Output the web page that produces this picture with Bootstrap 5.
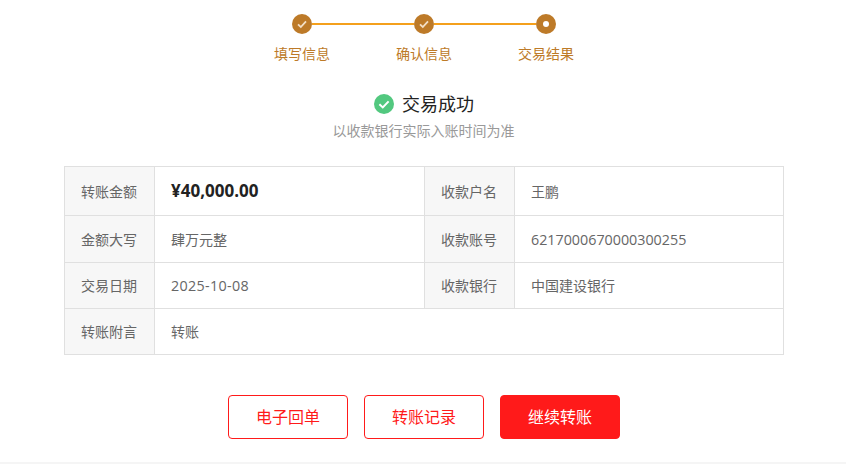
<!DOCTYPE html>
<html lang="zh-CN">
<head>
<meta charset="utf-8">
<title>交易结果</title>
<link rel="stylesheet" href="https://cdn.jsdelivr.net/npm/bootstrap@5.3.0/dist/css/bootstrap.min.css">
<style>
html,body{height:464px;overflow:hidden;background:#fff}
body{font-family:"Open Sans","Noto Sans CJK SC",sans-serif;font-size:14px;color:#666}
.page-wrap{height:462px;padding:14px 0 0 2px}
.foot-rule{height:2px;background:#f5f5f5}
.step-track{width:264px;height:20px}
.step-dot{width:20px;height:20px;border-radius:50%;background:#bd7a28;flex:none}
.step-line{height:2px;background:#f4a01c;flex:1 1 0}
.step-labels{width:366px;margin-top:10px;height:20px}
.step-label{width:122px;text-align:center;font-size:14px;line-height:20px;color:#bd7a28}
.result-head{margin-top:27px;height:26px}
.result-title{font-size:18px;line-height:26px;color:#222}
.result-sub{font-size:14px;line-height:20px;color:#999;margin-top:4px;text-align:center;padding-right:1px}
.info-table{width:720px;margin:25px auto 0;table-layout:fixed;border-collapse:collapse;border:1px solid #e0e0e0}
.info-table th,.info-table td{border:1px solid #e0e0e0;padding:0 16px;font-size:14px;font-weight:400;color:#666;vertical-align:middle;line-height:20px}
.info-table th{background:#f7f7f7;text-align:center;padding:0 1px 0 0}
.info-table .row-a th,.info-table .row-a td,.info-table .row-b th,.info-table .row-b td{padding-top:1px}
.col-lab{width:90px}
.col-left{width:270px}
.row-a{height:49px}
.row-b{height:47px}
.row-c{height:46px}
.info-table .row-a td.amount{font-size:17px;font-weight:700;color:#222;padding-top:0}
.num-text{font-size:14.3px}
.date-text{font-size:14.3px;letter-spacing:.35px}
.act-row{margin-top:40px}
.act-btn{width:120px;height:44px;border-radius:4px;font-size:16px;line-height:42px;padding:0;border:1px solid #ff1a1a;color:#ff1a1a;background:#fff}
.act-btn:hover{color:#ff1a1a;background:#fff;border-color:#ff1a1a}
.act-solid,.act-solid:hover{color:#fff;background:#ff1a1a}
</style>
</head>
<body>
<div class="page-wrap">
  <div class="step-track d-flex align-items-center mx-auto">
    <span class="step-dot d-flex align-items-center justify-content-center">
      <svg width="12" height="12" viewBox="0 0 12 12" fill="none" stroke="#f3dfc6" stroke-width="1.8"><path d="M2 6.4 4.8 9 10 3.4"/></svg>
    </span>
    <span class="step-line"></span>
    <span class="step-dot d-flex align-items-center justify-content-center">
      <svg width="12" height="12" viewBox="0 0 12 12" fill="none" stroke="#f3dfc6" stroke-width="1.8"><path d="M2 6.4 4.8 9 10 3.4"/></svg>
    </span>
    <span class="step-line"></span>
    <span class="step-dot d-flex align-items-center justify-content-center">
      <svg width="8" height="8" viewBox="0 0 8 8"><circle cx="4" cy="4" r="3" fill="#fff"/></svg>
    </span>
  </div>
  <div class="step-labels d-flex mx-auto justify-content-center">
    <div class="step-label">填写信息</div>
    <div class="step-label">确认信息</div>
    <div class="step-label">交易结果</div>
  </div>
  <div class="result-head d-flex align-items-center justify-content-center gap-2">
    <svg width="20" height="20" viewBox="0 0 20 20"><circle cx="10" cy="10" r="10" fill="#52c87f"/><path d="M5.4 10.2 8.8 13.4 14.6 7.4" fill="none" stroke="#fff" stroke-width="2"/></svg>
    <span class="result-title">交易成功</span>
  </div>
  <div class="result-sub">以收款银行实际入账时间为准</div>
  <table class="info-table">
    <colgroup><col class="col-lab"><col class="col-left"><col class="col-lab"><col></colgroup>
    <tr class="row-a"><th>转账金额</th><td class="amount">¥40,000.00</td><th>收款户名</th><td>王鹏</td></tr>
    <tr class="row-b"><th>金额大写</th><td>肆万元整</td><th>收款账号</th><td><span class="num-text">6217000670000300255</span></td></tr>
    <tr class="row-c"><th>交易日期</th><td><span class="date-text">2025-10-08</span></td><th>收款银行</th><td>中国建设银行</td></tr>
    <tr class="row-c"><th>转账附言</th><td colspan="3">转账</td></tr>
  </table>
  <div class="act-row d-flex justify-content-center gap-3">
    <button type="button" class="btn act-btn">电子回单</button>
    <button type="button" class="btn act-btn">转账记录</button>
    <button type="button" class="btn act-btn act-solid">继续转账</button>
  </div>
</div>
<div class="foot-rule"></div>
<script src="https://cdn.jsdelivr.net/npm/bootstrap@5.3.0/dist/js/bootstrap.bundle.min.js"></script>
</body>
</html>
